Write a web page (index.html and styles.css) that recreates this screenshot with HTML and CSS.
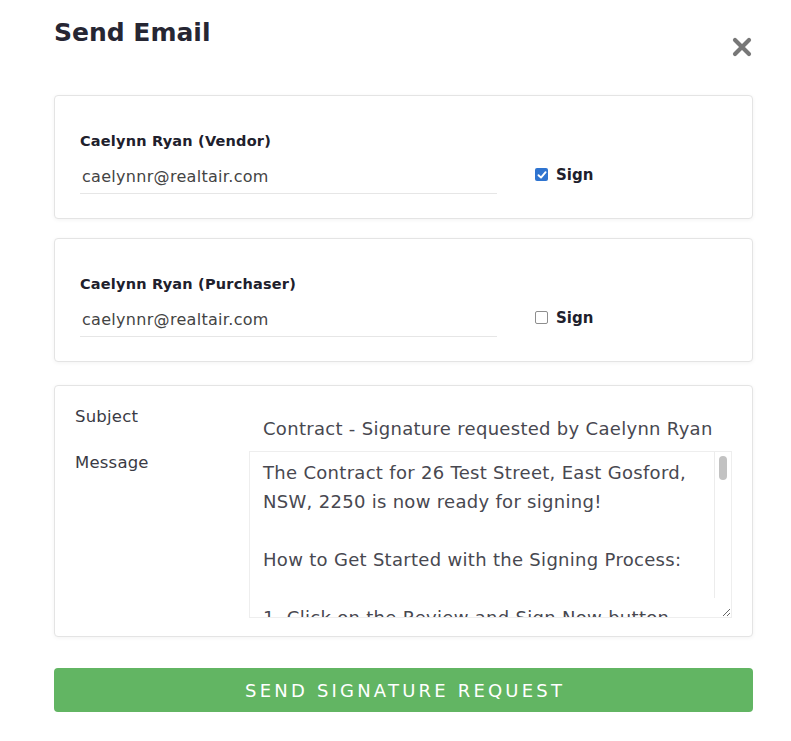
FILE: index.html
```html
<!DOCTYPE html>
<html lang="en">
<head>
<meta charset="utf-8">
<title>Send Email</title>
<link rel="stylesheet" href="styles.css">
</head>
<body>
<div class="modal">
  <div class="modal-header">
    <h1 class="modal-title">Send Email</h1>
    <button class="close-btn" aria-label="Close">
      <svg width="20" height="20" viewBox="0 0 20 20"><path d="M3 3 L17 17 M17 3 L3 17" stroke="#777" stroke-width="4.2" stroke-linecap="round"/></svg>
    </button>
  </div>

  <div class="card recipient">
    <div class="recipient-name">Caelynn Ryan (Vendor)</div>
    <div class="recipient-row">
      <div class="email-field">caelynnr@realtair.com</div>
      <label class="sign-check">
        <span class="box checked">
          <svg width="10" height="10" viewBox="0 0 10 10"><path d="M1.5 5.2 L4 7.6 L8.6 2.2" fill="none" stroke="#fff" stroke-width="1.9" stroke-linecap="round" stroke-linejoin="round"/></svg>
        </span>
        <span class="sign-text">Sign</span>
      </label>
    </div>
  </div>

  <div class="card recipient second">
    <div class="recipient-name">Caelynn Ryan (Purchaser)</div>
    <div class="recipient-row">
      <div class="email-field">caelynnr@realtair.com</div>
      <label class="sign-check">
        <span class="box"></span>
        <span class="sign-text">Sign</span>
      </label>
    </div>
  </div>

  <div class="card message-card">
    <div class="labels">
      <div class="field-label subject-label">Subject</div>
      <div class="field-label">Message</div>
    </div>
    <div class="fields">
      <div class="subject-field">Contract - Signature requested by Caelynn Ryan</div>
      <div class="message-wrap">
        <textarea class="message-field">The Contract for 26 Test Street, East Gosford, NSW, 2250 is now ready for signing!

How to Get Started with the Signing Process:

1. Click on the Review and Sign Now button below.
2. Review the contract carefully.
3. Sign where indicated.</textarea>
        <span class="scroll-track"><span class="scroll-thumb"></span></span>
      </div>
    </div>
  </div>

  <button class="send-btn">SEND SIGNATURE REQUEST</button>
</div>
</body>
</html>
```

FILE: styles.css
```css
html, body {
  margin: 0;
  padding: 0;
  background: #ffffff;
}

body {
  font-family: "DejaVu Sans", "Open Sans", sans-serif;
  color: #333;
}

.modal {
  width: 699px;
  padding: 0 38px 0 54px;
  display: flex;
  flex-direction: column;
}

.modal-header {
  display: flex;
  justify-content: space-between;
  align-items: flex-start;
  height: 95px;
}

.modal-title {
  margin: 17px 0 0 0;
  font-size: 25px;
  font-weight: 700;
  color: #262633;
  letter-spacing: 0;
  line-height: 32px;
}

.close-btn {
  margin-top: 37px;
  margin-right: 1px;
  padding: 0;
  border: 0;
  background: none;
  width: 20px;
  height: 20px;
  display: flex;
}

.card {
  border: 1px solid #e4e4e4;
  border-radius: 4px;
  box-shadow: 0 1px 4px rgba(0, 0, 0, 0.05);
  background: #fff;
  box-sizing: border-box;
}

.recipient {
  height: 124px;
  padding: 35px 0 0 25px;
}

.recipient.second {
  margin-top: 19px;
}

.recipient-name {
  font-size: 14.5px;
  font-weight: 700;
  letter-spacing: 0.2px;
  color: #20202c;
  line-height: 20px;
}

.recipient-row {
  display: flex;
  align-items: center;
  margin-top: 10px;
}

.email-field {
  width: 417px;
  height: 33px;
  padding: 1px 0 0 2px;
  border-bottom: 1px solid #e6e6e6;
  font-size: 16px;
  letter-spacing: 0.3px;
  line-height: 30px;
  color: #444;
  box-sizing: border-box;
}

.sign-check {
  display: flex;
  align-items: center;
  margin-left: 38px;
  margin-bottom: 6px;
}

.box {
  width: 13px;
  height: 13px;
  border-radius: 2px;
  border: 1px solid #8e8e8e;
  box-sizing: border-box;
  display: flex;
  align-items: center;
  justify-content: center;
  background: #fff;
}

.box.checked {
  border: 0;
  background: #2f74d0;
}

.sign-text {
  margin-left: 8px;
  font-size: 15px;
  font-weight: 700;
  color: #20202c;
}

.message-card {
  margin-top: 23px;
  height: 252px;
  display: flex;
  padding: 19px 20px 0 20px;
}

.labels {
  width: 174px;
  display: flex;
  flex-direction: column;
}

.field-label {
  font-size: 16.5px;
  letter-spacing: 0.2px;
  color: #3a3a44;
  line-height: 24px;
}

.subject-label {
  margin-bottom: 22px;
}

.fields {
  flex: 1;
  display: flex;
  flex-direction: column;
  margin-top: 1px;
}

.subject-field {
  height: 46px;
  padding: 11px 0 0 14px;
  box-sizing: border-box;
  border-bottom: 1px solid #eeeeee;
  font-size: 18px;
  letter-spacing: 0.3px;
  color: #484850;
  line-height: 24px;
  white-space: nowrap;
}

.message-wrap {
  position: relative;
  height: 166px;
  display: flex;
}

.message-field {
  flex: 1;
  height: 166px;
  margin: 0;
  padding: 6px 24px 0 13px;
  border: 1px solid #eeeeee;
  border-top: 0;
  box-sizing: border-box;
  font-family: "DejaVu Sans", "Open Sans", sans-serif;
  font-size: 18px;
  letter-spacing: 0.3px;
  line-height: 29px;
  color: #484850;
  resize: vertical;
  outline: none;
  overflow: hidden;
}

.scroll-track {
  position: absolute;
  top: 0;
  right: 1px;
  bottom: 20px;
  width: 17px;
  border-left: 1px solid #ececec;
  box-sizing: border-box;
}

.scroll-thumb {
  position: absolute;
  top: 4px;
  left: 4px;
  width: 8px;
  height: 24px;
  border-radius: 4px;
  background: #c2c2c2;
}

.send-btn {
  margin-top: 31px;
  height: 44px;
  width: 100%;
  border: 0;
  border-radius: 4px;
  background: #62b563;
  color: #fff;
  font-family: "DejaVu Sans", "Open Sans", sans-serif;
  font-size: 18px;
  font-weight: 400;
  letter-spacing: 3.2px;
  padding: 0 0 0 3.2px;
}
```
